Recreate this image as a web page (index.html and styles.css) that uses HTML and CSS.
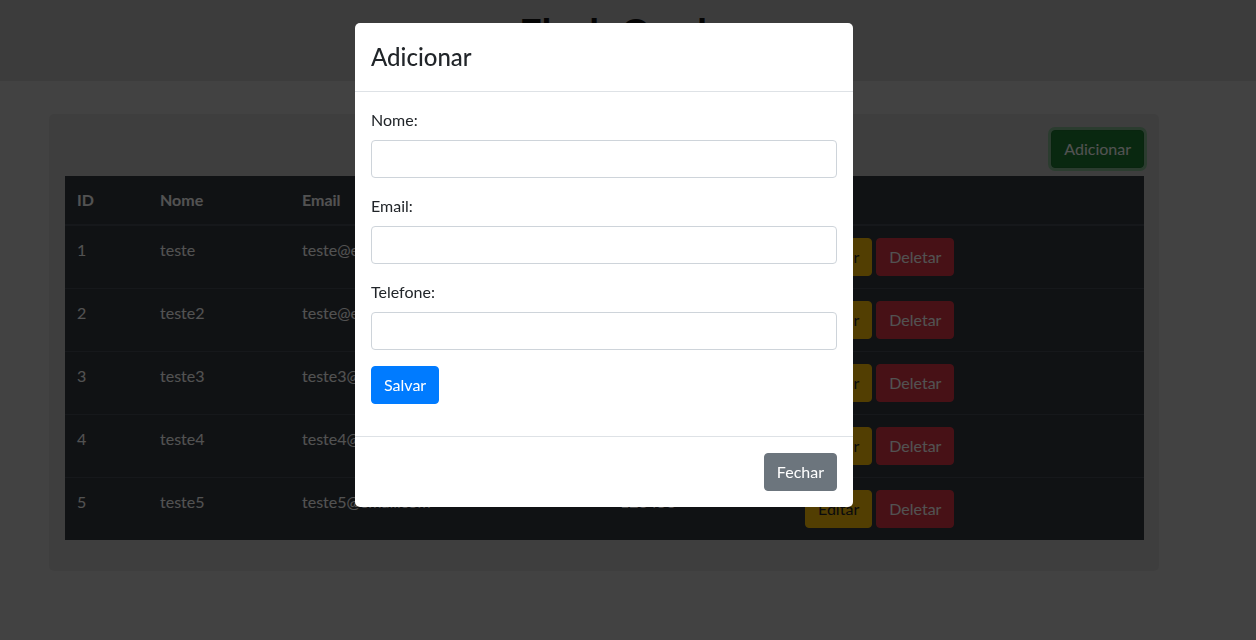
FILE: index.html
```html
<!DOCTYPE html>
<html lang="pt">
<head>
<meta charset="utf-8">
<title>Flask Crud</title>
<link rel="stylesheet" href="styles.css">
</head>
<body>
<div class="page">
  <header class="topbar">
    <h1>Flask Crud</h1>
  </header>
  <main class="container">
    <section class="card">
      <div class="toolbar">
        <button class="btn btn-success btn-focus">Adicionar</button>
      </div>
      <table class="table">
        <colgroup>
          <col class="c-id"><col class="c-nome"><col class="c-email"><col class="c-tel"><col>
        </colgroup>
        <thead>
          <tr><th>ID</th><th>Nome</th><th>Email</th><th>Telefone</th><th>Ações</th></tr>
        </thead>
        <tbody>
          <tr><td>1</td><td>teste</td><td>teste@email.com</td><td>123456</td><td><div class="actions"><button class="btn btn-warning">Editar</button><button class="btn btn-danger">Deletar</button></div></td></tr>
          <tr><td>2</td><td>teste2</td><td>teste@email.com</td><td>123456</td><td><div class="actions"><button class="btn btn-warning">Editar</button><button class="btn btn-danger">Deletar</button></div></td></tr>
          <tr><td>3</td><td>teste3</td><td>teste3@email.com</td><td>123456</td><td><div class="actions"><button class="btn btn-warning">Editar</button><button class="btn btn-danger">Deletar</button></div></td></tr>
          <tr><td>4</td><td>teste4</td><td>teste4@email.com</td><td>123456</td><td><div class="actions"><button class="btn btn-warning">Editar</button><button class="btn btn-danger">Deletar</button></div></td></tr>
          <tr><td>5</td><td>teste5</td><td>teste5@email.com</td><td>123456</td><td><div class="actions"><button class="btn btn-warning">Editar</button><button class="btn btn-danger">Deletar</button></div></td></tr>
        </tbody>
      </table>
    </section>
  </main>
</div>

<div class="backdrop"></div>

<div class="modal" role="dialog">
  <div class="modal-header">
    <h4 class="modal-title">Adicionar</h4>
  </div>
  <div class="modal-body">
    <form>
      <div class="form-group">
        <label for="nome">Nome:</label>
        <input class="form-control" id="nome" type="text">
      </div>
      <div class="form-group">
        <label for="email">Email:</label>
        <input class="form-control" id="email" type="text">
      </div>
      <div class="form-group">
        <label for="telefone">Telefone:</label>
        <input class="form-control" id="telefone" type="text">
      </div>
      <div class="form-group">
        <button type="button" class="btn btn-primary">Salvar</button>
      </div>
    </form>
  </div>
  <div class="modal-footer">
    <button type="button" class="btn btn-secondary">Fechar</button>
  </div>
</div>
</body>
</html>
```

FILE: styles.css
```css
* { box-sizing: border-box; }

body {
  margin: 0;
  background: #cecece;
  font-family: Lato, "Open Sans", "Liberation Sans", sans-serif;
  font-size: 16px;
  line-height: 1.5;
  color: #212529;
  overflow: hidden;
}

.page { width: 1208px; }

.topbar {
  height: 81px;
  margin-right: -48px;
  padding: 9px 48px 0 0;
  background: #bcbcbc;
  text-align: center;
}
.topbar h1 {
  margin: 0 0 0 18px;
  font-size: 40px;
  line-height: 48px;
  font-weight: 700;
  color: #111;
}

.container {
  width: 1140px;
  margin: 33px auto 0;
  padding: 0 15px;
}

.card {
  background: #c2c2c2;
  border-radius: 5px;
  padding: 16px 15px 15px 16px;
}

.toolbar {
  display: flex;
  justify-content: flex-end;
  margin-bottom: 8px;
}

.btn {
  display: inline-block;
  font-family: inherit;
  font-size: 16px;
  line-height: 24px;
  padding: 6px 12px;
  border: 1px solid transparent;
  border-radius: 4px;
  cursor: pointer;
}
.btn-success { background: #1e7e34; border-color: #1c7430; color: #fff; }
.btn-focus { box-shadow: 0 0 0 3px rgba(72, 180, 97, 0.5); }
.btn-warning { background: #ffc107; border-color: #ffc107; color: #212529; }
.btn-danger { background: #dc3545; border-color: #dc3545; color: #fff; }
.btn-primary { background: #007bff; border-color: #007bff; color: #fff; }
.btn-secondary { background: #6c757d; border-color: #6c757d; color: #fff; }

.table {
  width: 100%;
  table-layout: fixed;
  border-collapse: collapse;
  background: #343a40;
  color: #fff;
  margin-bottom: 16px;
}
.c-id { width: 83px; }
.c-nome { width: 142px; }
.c-email { width: 318px; }
.c-tel { width: 185px; }

.table th,
.table td {
  padding: 12px;
  text-align: left;
  vertical-align: top;
  border-top: 1px solid #454d55;
}
.table thead th {
  border-top: none;
  border-bottom: 2px solid #454d55;
  font-weight: 700;
}
.table td { white-space: nowrap; overflow: hidden; }

.actions { display: flex; gap: 4px; }

.backdrop {
  position: fixed;
  inset: 0;
  background: rgba(0, 0, 0, 0.68);
}

.modal {
  position: fixed;
  top: 23px;
  left: 355px;
  width: 498px;
  background: #fff;
  border-radius: 5px;
}

.modal-header {
  padding: 16px;
  border-bottom: 1px solid #dee2e6;
}
.modal-title {
  margin: 0;
  font-size: 24px;
  line-height: 36px;
  font-weight: 500;
  color: #212529;
}

.modal-body { padding: 16px; }
.modal-body form { margin: 0; }

.form-group { margin-bottom: 16px; }
.form-group label {
  display: inline-block;
  margin-bottom: 8px;
}
.form-control {
  display: block;
  width: 100%;
  height: 38px;
  padding: 6px 12px;
  font: inherit;
  border: 1px solid #ced4da;
  border-radius: 4px;
  background: #fff;
}

.modal-footer {
  display: flex;
  justify-content: flex-end;
  padding: 12px;
  border-top: 1px solid #dee2e6;
}
.modal-footer .btn { margin: 4px; }
```
